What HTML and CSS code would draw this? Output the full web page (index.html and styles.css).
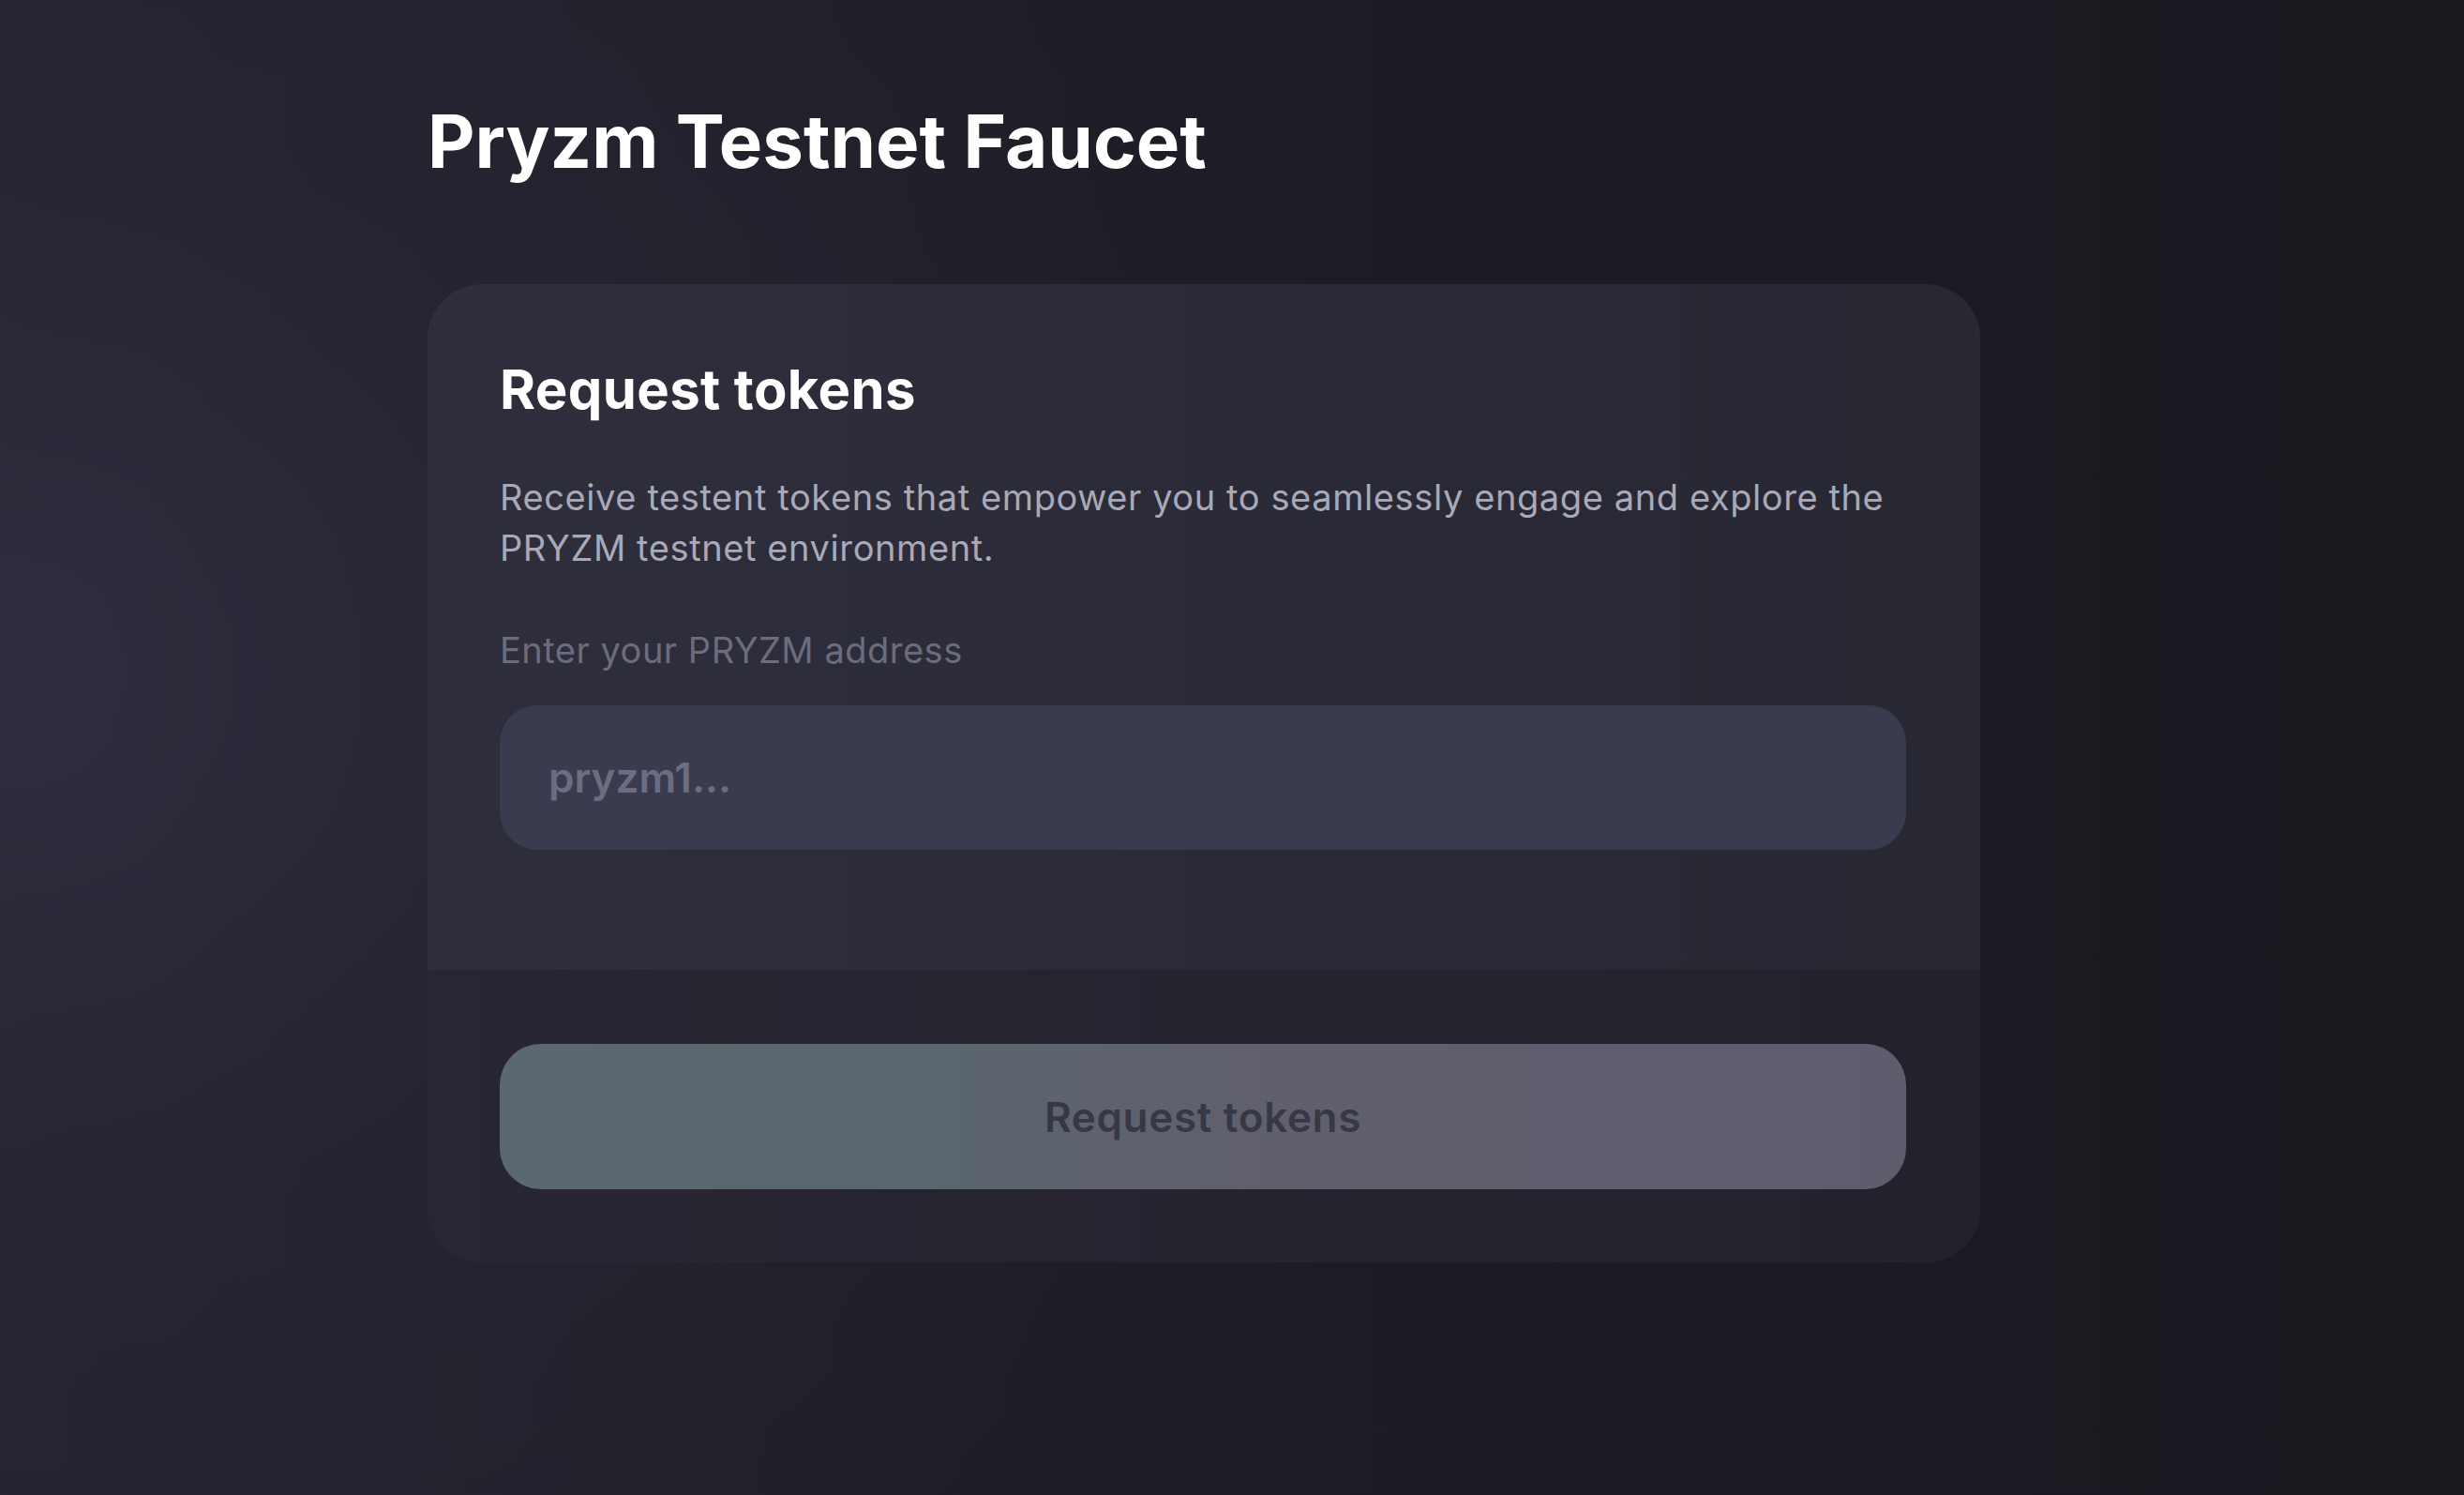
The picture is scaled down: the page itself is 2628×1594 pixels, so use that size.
FILE: index.html
```html
<!DOCTYPE html>
<html lang="en">
<head>
<meta charset="utf-8">
<title>Pryzm Testnet Faucet</title>
<link rel="stylesheet" href="styles.css">
</head>
<body>
<main class="page">
  <h1 class="title">Pryzm Testnet Faucet</h1>
  <section class="card">
    <div class="card-body">
      <h2 class="card-title">Request tokens</h2>
      <p class="desc">Receive testent tokens that empower you to seamlessly engage and explore the PRYZM testnet environment.</p>
      <label class="label" for="addr">Enter your PRYZM address</label>
      <input class="input" id="addr" type="text" placeholder="pryzm1...">
    </div>
    <div class="card-footer">
      <button class="btn" type="button" disabled>Request tokens</button>
    </div>
  </section>
</main>
</body>
</html>
```

FILE: styles.css
```css
html, body {
  margin: 0;
  padding: 0;
  height: 100%;
}
body {
  font-family: Inter, "Noto Sans", "Liberation Sans", sans-serif;
  background:
    radial-gradient(ellipse 1500px 1300px at 0% 45%, rgba(50, 47, 66, 0.85) 0%, rgba(42, 40, 55, 0.45) 45%, rgba(26, 25, 32, 0) 100%),
    linear-gradient(90deg, #24222e 0%, #1e1d26 45%, #1a1920 100%);
  color: #fff;
  min-height: 100vh;
}
.page {
  padding: 104px 0 0 456px;
  width: 1656px;
}
.title {
  margin: 0 0 105px 0;
  font-size: 78px;
  line-height: 94px;
  font-weight: 700;
  letter-spacing: 0;
  color: #ffffff;
}
.card {
  border-radius: 58px;
  overflow: hidden;
  background: linear-gradient(90deg, #2f2e3d 0%, #2a2a37 60%, #282833 100%);
}
.card-body {
  padding: 79px 79px 128px 77px;
  display: flex;
  flex-direction: column;
}
.card-title {
  margin: 0 0 55px 0;
  font-size: 58px;
  line-height: 66px;
  font-weight: 700;
  letter-spacing: 0.4px;
  color: #ffffff;
}
.desc {
  margin: 0 0 55px 0;
  font-size: 38px;
  line-height: 54px;
  letter-spacing: 0.6px;
  color: #a9a9b7;
}
.label {
  font-size: 38px;
  line-height: 54px;
  letter-spacing: 0.5px;
  color: #6d6c7d;
  margin-bottom: 32px;
}
.input {
  box-sizing: border-box;
  height: 154px;
  width: 100%;
  border: none;
  outline: none;
  border-radius: 40px;
  background: #3b3b50;
  padding: 0 52px;
  font-family: inherit;
  font-size: 44px;
  font-weight: 600;
  color: #ffffff;
}
.input::placeholder {
  color: #6d6d81;
}
.card-footer {
  background: linear-gradient(90deg, #272632 0%, #24232e 60%, #23222c 100%);
  padding: 79px 79px 78px 77px;
}
.btn {
  display: block;
  width: 100%;
  height: 155px;
  border: none;
  border-radius: 44px;
  background: linear-gradient(90deg, #5a6870 0%, #5b666f 30%, #605f6e 55%, #5e5c6d 100%);
  font-family: inherit;
  font-size: 44px;
  font-weight: 600;
  letter-spacing: 0.7px;
  color: #373746;
  cursor: default;
}
```
